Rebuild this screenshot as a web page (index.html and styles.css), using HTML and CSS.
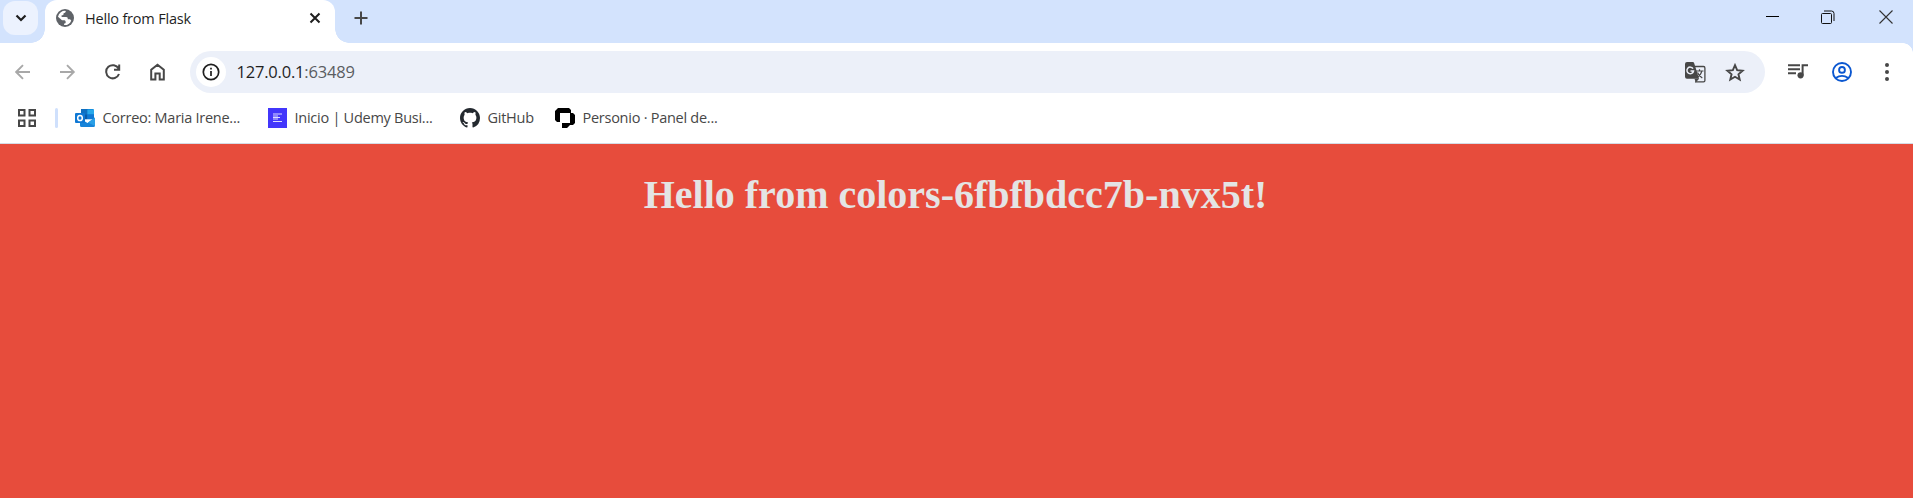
FILE: index.html
```html
<!DOCTYPE html>
<html lang="en">
<head>
<meta charset="utf-8">
<title>Hello from Flask</title>
<link rel="stylesheet" href="styles.css">
</head>
<body>
<header class="browser">
  <div class="tabstrip">
    <button class="tab-search" aria-label="Search tabs">
      <svg width="12" height="8" viewBox="0 0 12 8"><path d="M1.500 1.500 6 6l4.500-4.500" fill="none" stroke="#1f1f1f" stroke-width="2.200"/></svg>
    </button>
    <div class="tab">
      <svg class="globe" width="18" height="18" viewBox="0 0 18 18"><circle cx="9" cy="9" r="9" fill="#5f6368"/><path d="M9.800 1.900C9.700 3.200 9 4 7.600 4 8 5.600 7.200 6.300 5.600 6.300v1.800h4.600c1.300 0 1.600.8 1.600 2.100h1.300c1.300 0 1.900.6 2.100 1.500A7.200 7.200 0 0 1 8.100 16.100v-1.500c1.200 0 1.600-.7 1.600-1.700 0-1.300-1-1.700-2.200-1.700H6L2 7.700A7.200 7.200 0 0 1 9.800 1.900Z" fill="#fff"/></svg>
      <span class="tab-title">Hello from Flask</span>
      <svg class="tab-close" width="12" height="12" viewBox="0 0 12 12"><path d="m1.500 1.500 9 9m0-9-9 9" stroke="#1f1f1f" stroke-width="2"/></svg>
    </div>
    <svg class="new-tab" width="14" height="14" viewBox="0 0 14 14"><path d="M7 .5v13M.5 7h13" stroke="#474747" stroke-width="2"/></svg>
    <div class="window-controls">
      <svg width="13" height="14" viewBox="0 0 13 14"><path d="M0 6.500h13" stroke="#000"/></svg>
      <svg width="14" height="14" viewBox="0 0 14 14" fill="none" stroke="#111"><rect x=".5" y="3.500" width="10" height="10" rx="1"/><path d="M3 1h7.500q2.500 0 2.500 2.500V11"/></svg>
      <svg width="14" height="14" viewBox="0 0 14 14"><path d="m.5.5 13 13m0-13-13 13" stroke="#333" stroke-width="1.100"/></svg>
    </div>
  </div>

  <div class="toolbar">
    <nav class="nav">
      <svg width="16" height="16" viewBox="0 0 16 16"><path d="M15 8H1.500M8 1.200 1.200 8 8 14.800" fill="none" stroke="#a8a8a8" stroke-width="1.900"/></svg>
      <svg width="16" height="16" viewBox="0 0 16 16"><path d="M0 8h13.500M7 1.200 13.800 8 7 14.800" fill="none" stroke="#a8a8a8" stroke-width="1.900"/></svg>
      <svg width="16" height="16" viewBox="0 0 16 16"><path d="M14 10A6.600 6.600 0 1 1 13.600 4.600M14.200.5v5.300H9" fill="none" stroke="#474747" stroke-width="2"/></svg>
      <svg width="16" height="18" viewBox="0 0 16 18"><path d="M1.200 16.500V6.800l6.300-5.100 6.300 5.100v9.700H9.700v-6H5.400v6Z" fill="none" stroke="#474747" stroke-width="2"/></svg>
    </nav>
    <div class="omnibox">
      <span class="site-info">
        <svg width="18" height="18" viewBox="0 0 18 18"><circle cx="9" cy="9" r="7.700" fill="none" stroke="#1f1f1f" stroke-width="1.700"/><path d="M9 8v5M9 4.800v1.800" stroke="#1f1f1f" stroke-width="1.700"/></svg>
      </span>
      <span class="url">127.0.0.1<span class="port">:63489</span></span>
      <svg class="translate" width="21" height="21" viewBox="0 0 21 21"><path d="M10 4.500h8.500q1.400 0 1.400 1.400v12.500q0 1.400-1.400 1.400H10" fill="none" stroke="#474747" stroke-width="1.300"/><path d="M2 0h5.800q1 0 1.300 1l5 15.700H2q-2 0-2-2V2q0-2 2-2Z" fill="#474747"/><path d="M9.500 16.700h4.600L10.800 20.500Z" fill="#474747"/><path d="M8 6.600A3.300 3.300 0 1 0 8.500 9H5.500" fill="none" stroke="#ecf0f9" stroke-width="1.500"/><path d="M11 9h7.500M14.500 7.300V9m2.300 0c-.5 2.600-2 4.600-4.300 6M12.500 10.500c.7 1.900 2.500 4 4.800 5.500" fill="none" stroke="#474747" stroke-width="1.200"/></svg>
      <svg width="20" height="19" viewBox="0 0 20 19"><path d="m10 2.200 2.150 5 5.450.5-4.150 3.600 1.250 5.300L10 13.800l-4.700 2.800 1.250-5.300L2.400 7.700l5.450-.5Z" fill="none" stroke="#474747" stroke-width="1.900"/></svg>
    </div>
    <div class="actions">
      <svg width="20" height="15" viewBox="0 0 20 15"><path d="M0 1.200h12M0 5.200h12M0 9.200h8M14.500 1.200H20M14.600.2v11" fill="none" stroke="#474747" stroke-width="2"/><circle cx="12.600" cy="11.300" r="3.100" fill="#474747"/></svg>
      <svg class="profile" width="20" height="20" viewBox="0 0 20 20" fill="none" stroke="#0b57d0" stroke-width="1.900"><circle cx="10" cy="10" r="9"/><circle cx="10" cy="7.900" r="2.900"/><path d="M3.700 16q6.300-4.200 12.600 0"/></svg>
      <svg width="4" height="18" viewBox="0 0 4 18" fill="#474747"><circle cx="2" cy="2" r="2"/><circle cx="2" cy="9" r="2"/><circle cx="2" cy="16" r="2"/></svg>
    </div>
  </div>

  <div class="bookmarks">
    <svg class="apps" width="18" height="18" viewBox="0 0 18 18" fill="none" stroke="#474747" stroke-width="2"><path d="M1 1h5.500v5.500H1ZM11.500 1H17v5.500h-5.500ZM1 11.500h5.500V17H1ZM11.500 11.500H17V17h-5.500Z"/></svg>
    <span class="divider"></span>
    <a class="bookmark outlook">
      <svg width="20" height="18" viewBox="0 0 20 18"><path d="M6 1q0-1 1-1h11q1 0 1 1v9H6Z" fill="#1490df"/><path d="M6 0h6.500v5H6Z" fill="#0f6fc0"/><path d="M12.500 1H19v4.500h-6.500Z" fill="#28a8ea"/><path d="M6 5.300h6.500v5H6Z" fill="#0a5aa8"/><path d="M12.500 5.300H19v5h-6.500Z" fill="#0f78d4"/><path d="M5 9.500 12.500 14 20 8.500V16.500q0 1.500-1.500 1.500h-12Q5 18 5 16.500Z" fill="#1784d9"/><path d="M13 13.500 20 8.500V17Z" fill="#2a9fe6"/><rect y="4" width="10" height="10" rx="1" fill="#0f78d4"/><ellipse cx="5" cy="9" rx="2.300" ry="2.600" fill="none" stroke="#fff" stroke-width="1.500"/></svg>
      <span>Correo: Maria Irene...</span>
    </a>
    <a class="bookmark udemy">
      <svg width="19" height="20" viewBox="0 0 19 20"><path d="M0 0h19v20H0Z" fill="#4236fb"/><path d="M5 7h5v5H5Z" fill="#8c85fc"/><path d="M5 6h9M5 9.500h7M5 13.500h9" stroke="#dedcff" stroke-width="1.200"/></svg>
      <span>Inicio | Udemy Busi...</span>
    </a>
    <a class="bookmark github">
      <svg width="20" height="20" viewBox="0 0 16 16"><path fill="#24292f" d="M8 0C3.580 0 0 3.580 0 8c0 3.540 2.290 6.530 5.470 7.590.4.070.55-.17.55-.38 0-.19-.01-.82-.01-1.490-2.010.37-2.530-.49-2.690-.94-.09-.23-.48-.94-.82-1.130-.28-.15-.68-.52-.01-.53.63-.01 1.080.58 1.230.82.72 1.210 1.870.87 2.330.66.070-.52.28-.87.51-1.070-1.780-.2-3.640-.89-3.640-3.950 0-.87.31-1.590.82-2.150-.08-.2-.36-1.020.08-2.120 0 0 .67-.21 2.200.82.64-.18 1.320-.27 2-.27s1.360.09 2 .27c1.530-1.040 2.200-.82 2.200-.82.44 1.100.16 1.920.08 2.120.51.56.82 1.270.82 2.150 0 3.070-1.870 3.750-3.650 3.950.29.25.54.73.54 1.480 0 1.070-.01 1.930-.01 2.200 0 .21.15.46.55.38A8.010 8.010 0 0 0 16 8c0-4.420-3.580-8-8-8Z"/></svg>
      <span>GitHub</span>
    </a>
    <a class="bookmark personio">
      <svg width="20" height="20" viewBox="0 0 20 20"><path d="M5 0h9l2 2v3h2l2 2v8l-2 2h-3l-3 3H7v-5h8V5H5v9H2l-2-2V3l3-3Z"/></svg>
      <span>Personio · Panel de...</span>
    </a>
  </div>
</header>
<main class="page"><h1>Hello from colors-6fbfbdcc7b-nvx5t!</h1></main>
</body>
</html>
```
FILE: styles.css
```css
* { box-sizing: border-box; }
body {
  margin: 0;
  height: 498px;
  display: flex;
  flex-direction: column;
  overflow: hidden;
  font-family: "Open Sans", "Noto Sans", sans-serif;
}
svg { display: block; flex: none; }
.browser { flex: none; height: 144px; background: #fff; border-bottom: 1px solid #d5dce6; }

.tabstrip { display: flex; height: 43px; background: #d3e3fd; padding-left: 3px; }
.tab-search {
  width: 35px; height: 34px; margin-top: 1px; padding: 0;
  border: 0; border-radius: 12px; background: #ecf2fe;
  display: flex; align-items: center; justify-content: center;
}
.tab {
  position: relative;
  display: flex; align-items: center;
  width: 290px; height: 43px; margin-left: 7px; padding: 0 14px 7px 11px;
  background: #fff; border-radius: 12px 12px 0 0;
}
.tab::before, .tab::after {
  content: ""; position: absolute; bottom: 0; width: 14px; height: 14px;
}
.tab::before { left: -14px; background: radial-gradient(circle at 0 0, transparent 13.500px, #fff 14px); }
.tab::after { right: -14px; background: radial-gradient(circle at 100% 0, transparent 13.500px, #fff 14px); }
.tab-title { flex: 1; margin-left: 11px; padding-top: 1px; font-size: 14.500px; letter-spacing: -0.200px; color: #1f1f1f; white-space: nowrap; }
.new-tab { margin: 11px 0 0 18.500px; }
.window-controls { display: flex; gap: 44px; margin: 10px 20px 0 auto; }
.window-controls svg:first-child { margin-right: -2px; }
.window-controls svg:nth-child(2) { margin-right: 0; }

.toolbar {
  position: relative;
  display: flex; align-items: center;
  height: 58px; padding: 0 23px 0 15px;
  background: #fff;
}
.toolbar::before {
  content: ""; position: absolute; inset: 0 0 auto auto; width: 10px; height: 10px;
  background: radial-gradient(circle at 0 100%, transparent 9.500px, #d3e3fd 10px);
}
.nav { display: flex; align-items: center; gap: 29px; width: 175px; }
.omnibox {
  flex: none; display: flex; align-items: center;
  width: 1575px; height: 42px; padding: 0 20px 0 6px;
  border-radius: 21px; background: #ecf0f9;
}
.site-info {
  display: flex; align-items: center; justify-content: center;
  width: 30px; height: 30px; border-radius: 50%; background: #fff;
}
.url { flex: 1; margin-left: 10.500px; padding-bottom: 1px; font-size: 16.500px; letter-spacing: -0.200px; color: #1f1f1f; }
.port { color: #5a5d61; }
.translate { margin-right: 19px; margin-top: 1px; }
.actions { display: flex; align-items: center; flex: 1; margin-left: 23px; }
.actions svg:first-child { margin-top: -2px; }
.profile { margin: 0 33px 0 24px; }

.bookmarks { display: flex; align-items: center; height: 34px; padding-left: 18px; font-size: 14.500px; letter-spacing: -0.260px; color: #474747; }
.divider { width: 3px; height: 20px; margin: 0 17px 0 19px; border-radius: 2px; background: #cfe0fc; }
.bookmark { display: flex; align-items: center; gap: 7.500px; white-space: nowrap; }
.bookmark span { padding-bottom: 2px; }
.outlook { width: 193px; }
.udemy { width: 192px; }
.github { width: 95px; }

.page { flex: 1; background: #e74c3c; color: #e4e4e4; text-align: center; }
h1 { margin: 28px 2px 0 0; font: bold 40px/46px "Liberation Serif", serif; }
```
